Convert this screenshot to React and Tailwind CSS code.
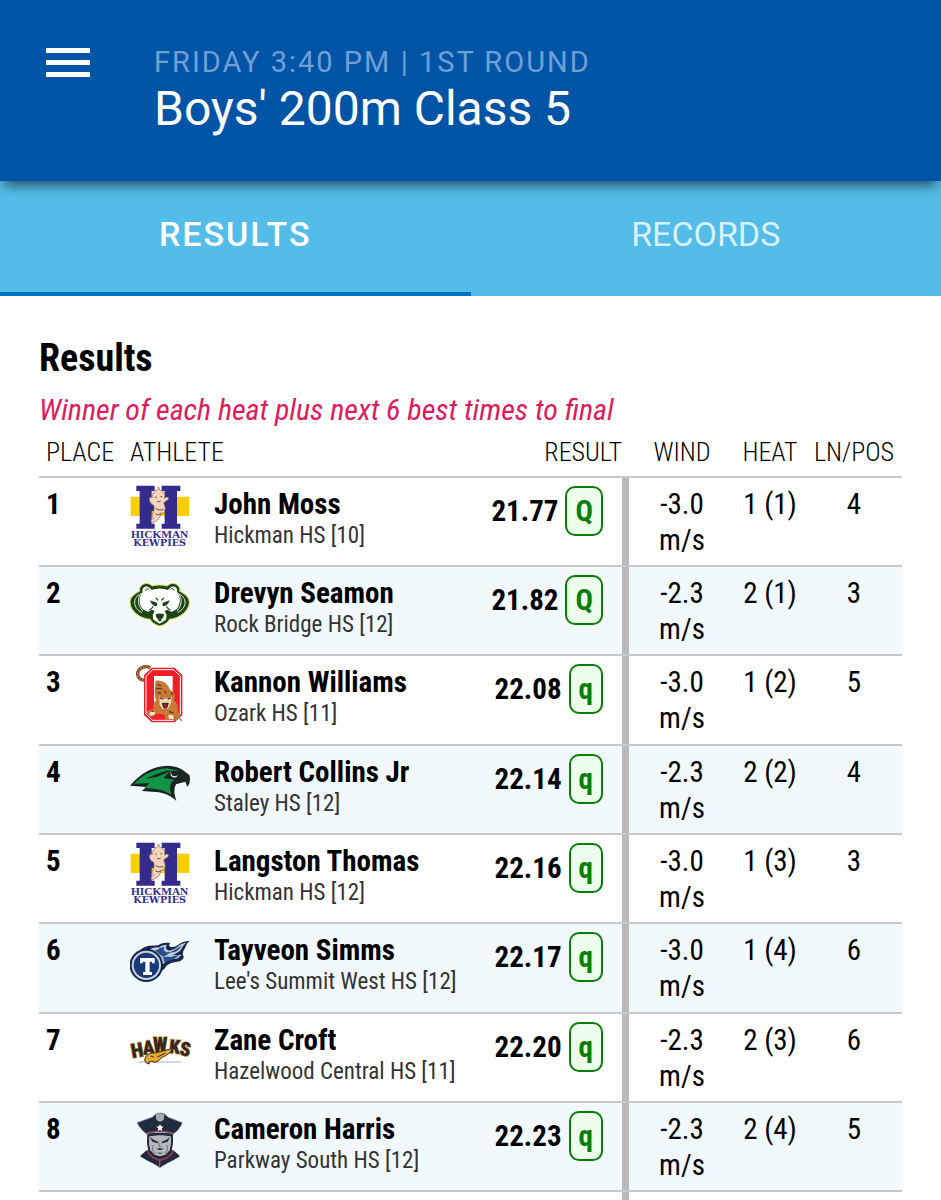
import React from "react";

const logos = {
  hickman: HickmanLogo,
  rockBridge: BruinLogo,
  ozark: OzarkLogo,
  staley: FalconLogo,
  leesSummit: TitanLogo,
  hazelwood: HawksLogo,
  parkway: PatriotLogo,
};

const results = [
  { place: 1, name: "John Moss", school: "Hickman HS [10]", logo: "hickman", time: "21.77", mark: "Q", wind: "-3.0", heat: "1 (1)", lane: 4 },
  { place: 2, name: "Drevyn Seamon", school: "Rock Bridge HS [12]", logo: "rockBridge", time: "21.82", mark: "Q", wind: "-2.3", heat: "2 (1)", lane: 3 },
  { place: 3, name: "Kannon Williams", school: "Ozark HS [11]", logo: "ozark", time: "22.08", mark: "q", wind: "-3.0", heat: "1 (2)", lane: 5 },
  { place: 4, name: "Robert Collins Jr", school: "Staley HS [12]", logo: "staley", time: "22.14", mark: "q", wind: "-2.3", heat: "2 (2)", lane: 4 },
  { place: 5, name: "Langston Thomas", school: "Hickman HS [12]", logo: "hickman", time: "22.16", mark: "q", wind: "-3.0", heat: "1 (3)", lane: 3 },
  { place: 6, name: "Tayveon Simms", school: "Lee's Summit West HS [12]", logo: "leesSummit", time: "22.17", mark: "q", wind: "-3.0", heat: "1 (4)", lane: 6 },
  { place: 7, name: "Zane Croft", school: "Hazelwood Central HS [11]", logo: "hazelwood", time: "22.20", mark: "q", wind: "-2.3", heat: "2 (3)", lane: 6 },
  { place: 8, name: "Cameron Harris", school: "Parkway South HS [12]", logo: "parkway", time: "22.23", mark: "q", wind: "-2.3", heat: "2 (4)", lane: 5 },
];

function HickmanLogo() {
  return (
    <svg viewBox="30 30 180 180" className="size-[60px] overflow-visible" role="img" aria-label="Hickman Kewpies">
      <path d="M32 62H208V120H32z" fill="#f6d000" />
      <path d="M49 29H104V45H95V80H134V45H125V29H181V45H171V143H181V158H125V143H134V105H95V143H104V158H49V143H59V45H49z" fill="#332c8c" />
      <path d="M112 42c4-4 3-6 1-9 6 3 5 6 6 9 12 3 17 12 14 24l8-3c6 0 6 7 1 10l-11 7c3 9 6 15 4 23-1 7-6 9-14 9 1 6-1 13-8 20l-16 9-5-6 10-9c-9-2-6-10-2-17 3-8 3-16 1-21-7-2-13-11-13-19l3-6 6 2c-1-10 4-19 15-23z" fill="#f6d3bf" stroke="#80604f" strokeWidth="2" />
      <path d="M105 63l5 1M121 63l5-2M111 76q6 4 11-1M107 98q10 7 24 3M106 114q10 6 16-1" fill="none" stroke="#493733" strokeWidth="2.5" />
      <text x="119" y="185" textAnchor="middle" fontSize="34" fontWeight="700" fontFamily="Liberation Serif, serif" fill="#332c8c">HICKMAN</text>
      <text x="119" y="210" textAnchor="middle" fontSize="29" fontWeight="700" fontFamily="DejaVu Serif, serif" fill="#332c8c">KEWPIES</text>
    </svg>
  );
}

function BruinLogo() {
  return (
    <svg viewBox="30 30 180 180" className="size-[60px]" role="img" aria-label="Rock Bridge Bruins">
      <path d="M64 62c8-9 24-9 32 1 15-4 31-4 46 0 8-10 24-10 32-1 5 5 7 11 5 17 18 8 29 20 29 33 0 25-30 49-60 51-5 10-13 16-29 20-15-4-24-10-28-20-32-2-61-26-61-51 0-13 11-25 29-33-2-6 0-12 5-17z" fill="#1c4518" stroke="#dfe04a" strokeWidth="3" />
      <path d="M58 88c-20 14-20 40 8 55M64 84c-12 16-12 36 4 54M181 88c20 14 20 40-8 55M175 84c12 16 12 36-4 54" fill="none" stroke="#e6f0de" strokeWidth="3" />
      <path d="M68 80c-4-12 12-22 22-10l5 5c16-6 33-6 49 0l5-5c10-12 26-2 22 10 10 14 12 32 2 48-4 6-12 10-20 12l-11-6-8 4 6 12-2 14-19 12-19-12-2-14 6-12-8-4-11 6c-8-2-16-6-20-12-9-16-7-34 3-48z" fill="#fff" />
      <path d="M77 78c-1-6 6-10 11-4M162 78c1-6-6-10-11-4" fill="none" stroke="#1c4518" strokeWidth="3" />
      <path d="M90 106l22 8-2 10c-9 0-16-6-20-18zM149 106l-22 8 2 10c9 0 16-6 20-18zM107 148q12-5 25 0c0 8-4 13-8 15v6h-9v-6c-4-2-8-7-8-15z" fill="#1c4518" />
      <path d="M107 99l8 7M132 99l-8 7M88 136q8-5 12-12M151 136q-8-5-12-12" fill="none" stroke="#1c4518" strokeWidth="3.5" />
    </svg>
  );
}

function OzarkLogo() {
  return (
    <svg viewBox="30 27 180 180" className="size-[60px]" role="img" aria-label="Ozark Tigers">
      <path d="M91 38c-18-9-38 3-38 19 0 11 9 20 25 19" fill="none" stroke="#7d432b" strokeWidth="10" />
      <path d="M91 38c-18-9-38 3-38 19 0 11 9 20 25 19" fill="none" stroke="#c88645" strokeWidth="5" strokeDasharray="5 4" />
      <path fillRule="evenodd" d="M95 38H164L187 61V180L164 202H95L72 180V61zM106 67V171H154V67z" fill="#ee1f27" />
      <path d="M98 44H161L181 64V177L161 196H98L78 177V64z" fill="none" stroke="#fff" strokeWidth="3" />
      <path d="M104 65H156V173H104z" fill="#fff" stroke="#fff" strokeWidth="4" />
      <path d="M107 77c19-3 38 8 43 28 17 6 16 21 11 31 9 4 13 17 12 31l8 16-9 13-36-2-3-15-19-4-19 11-15-7 3-12 19-6c-5-8-1-19 7-25-7-16-5-38-2-59z" fill="#c97835" />
      <path d="M112 88l12 5M108 100l18 1M112 112l12 4M153 112l5 9M147 170l14 4M158 183l7 9M99 167l-6 8M133 107l6 8" stroke="#5a3420" strokeWidth="3.5" />
      <path d="M117 124l14 7 12-1 13-5-3 20-9 16-16 1-9-12z" fill="#ecd6b4" />
      <path d="M119 128l10 5M153 128l-10 5" stroke="#342118" strokeWidth="3.5" />
      <path d="M127 145h18l-5 14h-8z" fill="#a01f2c" stroke="#342118" strokeWidth="3" />
      <path d="M145 180h14l4 12h-16zM90 171h16l-4 10-13 1z" fill="#efe2d3" />
      <path d="M171 181l14 17" stroke="#8a8a8a" strokeWidth="4" />
    </svg>
  );
}

function FalconLogo() {
  return (
    <svg viewBox="30 26 180 180" className="size-[60px]" role="img" aria-label="Staley Falcons">
      <path d="M30 121C62 84 97 62 144 61c24 2 42 8 53 20l11 8c4 12 2 27-6 35l-6-15-28 8c-7 14-6 28 1 50-16-16-35-25-62-27l-41-3 12-12z" fill="#1b2422" />
      <path d="M42 115c29-28 60-44 99-46l38 8-39-1c-26 7-48 17-65 25l38-7 37-16-20 20 34 5-9 7c-6 10-6 21-1 39-20-15-49-20-81-20l16-16z" fill="#119348" />
      <path d="M153 78c0 13 5 17 16 14l5-3c-4 7-9 9-15 7-7-3-9-9-6-18z" fill="#fff" />
    </svg>
  );
}

function TitanLogo() {
  return (
    <svg viewBox="30 21 180 180" className="size-[60px]" role="img" aria-label="Lee's Summit West Titans">
      <path d="M58 78c9-9 19-16 34-16l23-1c7-6 19-10 35-7-5 9-1 14 8 12 17-2 21-17 51-19-13 12-11 21-19 30l-2 14c6 2 4 12-9 18l-26 5-14 8c-4 9-8 14-22 16z" fill="#14264d" />
      <path d="M83 76c15-9 26-11 34-8 4-7 14-8 24-9-9 13 4 23 20 14 13-8 18-17 38-20-15 12-11 21-25 29l-15 9 25-2c-7 11-17 14-28 13l-19 8-16 15z" fill="#bfc9d6" />
      <path d="M104 75c14 2 14-10 28-9-5 15 11 19 25 13l28-17c-8 12-15 20-30 20-11 3-17 13-27 13zM129 97c18-4 21 2 31-3l18-5-18 15-27 8z" fill="#254f91" />
      <circle cx="79" cy="121" r="50" fill="#14264d" />
      <circle cx="79" cy="121" r="44" fill="#c8d2dc" />
      <circle cx="79" cy="121" r="38" fill="#173b78" />
      <path d="M60 99H104V115H96V110H89V141H96V150H69V141H76V110H68V115H60z" fill="#fff" />
    </svg>
  );
}

function HawksLogo() {
  return (
    <svg viewBox="30 19 180 180" className="size-[60px] overflow-visible" role="img" aria-label="Hazelwood Central Hawks">
      <g fontFamily="Roboto Condensed, sans-serif" fontWeight="900" fill="#36271d" stroke="#c9a45a" strokeWidth="4" paintOrder="stroke">
        <text x="37" y="128" fontSize="60" transform="rotate(-10 37 128)">H</text>
        <text x="70" y="117" fontSize="58" transform="rotate(-5 70 117)">A</text>
        <text x="99" y="110" fontSize="58">W</text>
        <text x="146" y="112" fontSize="58" transform="rotate(5 146 112)">K</text>
        <text x="177" y="118" fontSize="58" transform="rotate(9 177 118)">S</text>
      </g>
      <path d="M54 139H185" stroke="#8a83a0" strokeWidth="2" />
      <path d="M74 134c3-18 14-23 32-22l52-14c-8 15-18 22-33 27-5 8-13 14-21 15-7-4-13-4-18-1l2 6-9-3z" fill="#e5aa29" stroke="#36271d" strokeWidth="3" />
      <path d="M92 121l9 3M112 124l25-12" stroke="#36271d" strokeWidth="3" />
    </svg>
  );
}

function PatriotLogo() {
  return (
    <svg viewBox="30 32 180 180" className="size-[60px]" role="img" aria-label="Parkway South Patriots">
      <path d="M80 150l-20 17c18 14 40 20 60 35 20-15 42-21 60-35l-20-17z" fill="#202b40" />
      <path d="M82 150q5 20 38 30 34-9 40-30M119 177v24" fill="none" stroke="#c73b55" strokeWidth="4" />
      <path d="M82 98h77v30l-4 24-17 16-18 5-18-5-17-16-4-24z" fill="#202b40" />
      <path d="M88 108l27-3h11l27 3v22l-4 20-13 13-16 5-16-5-13-13-4-20z" fill="#b6b9bd" />
      <path d="M90 110l12 9 13 5-1 5-17-5zM150 110l-12 9-13 5 1 5 17-5zM108 146l12-3 12 3-12 3zM111 157h18l-9 4z" fill="#202b40" />
      <path d="M117 126v12h7M99 134l-1 16 9 10M141 134l1 16-9 10" fill="none" stroke="#666e79" strokeWidth="3" />
      <path d="M51 67L98 50c10-14 34-17 45 0l44 17c-5 14-15 25-27 34-24-7-54-7-80 0-12-9-22-20-29-34z" fill="#202b40" stroke="#8b939d" strokeWidth="2" />
      <path d="M80 98q40-12 80 0" fill="none" stroke="#c73b55" strokeWidth="3" />
      <path d="M107 43q13-7 26 0l-2 16-11 6-11-6z" fill="#a7abb0" />
      <path d="M120 71l3 7 8 1-6 5 2 8-7-4-7 4 2-8-6-5 8-1z" fill="#fff" />
    </svg>
  );
}

function ResultRow({ row }) {
  const Logo = logos[row.logo];
  return (
    <tr className="align-top even:bg-[#f1f9fd] *:border-b-2 *:border-[#c8c9cc] *:pt-2 *:pb-[7px] nth-[3n]:*:pb-2">
      <td className="pl-[7px] text-[29px] leading-[37px] font-bold">{row.place}</td>
      <td className="pl-2">
        <div className="flex gap-6">
          <div className="h-[60px] w-[60px] shrink-0">
            <Logo />
          </div>
          <div className="whitespace-nowrap">
            <div className="text-[29px] leading-[37px] font-bold">{row.name}</div>
            <div className="text-[23px] leading-[26px] text-[#333]">{row.school}</div>
          </div>
        </div>
      </td>
      <td className="pr-[19px]">
        <div className="flex items-center justify-end gap-[7px] text-[29px] leading-9 font-bold">
          {row.time}
          <span className="rounded-[10px] border-2 border-[#087d08] bg-[#edfdeb] px-2 py-[5px] text-[#087d08]">{row.mark}</span>
        </div>
      </td>
      <td className="pr-2 pl-4 text-center text-[29px] leading-9 shadow-[inset_7px_0_0_#b9b9b9]">
        {row.wind}
        <br />
        m/s
      </td>
      <td className="text-center text-[29px] leading-9 whitespace-nowrap">{row.heat}</td>
      <td className="text-center text-[29px] leading-9">{row.lane}</td>
    </tr>
  );
}

export default function App() {
  return (
    <div className="min-h-screen bg-white font-['Roboto_Condensed',Roboto,sans-serif] text-black">
      {/* Top bar */}
      <header className="relative z-10 flex items-start bg-[#0054a6] px-[46px] pt-11 pb-11 font-[Roboto,sans-serif] text-white shadow-[0_8px_12px_-4px_rgba(0,0,0,0.6)]">
        <button type="button" aria-label="Menu" className="mt-1 flex w-11 shrink-0 flex-col gap-[7px]">
          <span className="h-[5px] w-full bg-white" />
          <span className="h-[5px] w-full bg-white" />
          <span className="h-[5px] w-full bg-white" />
        </button>
        <div className="ml-16">
          <p className="text-[29px] leading-9 tracking-[2px] text-[#6ea0d6]">FRIDAY 3:40 PM | 1ST ROUND</p>
          <h1 className="text-[48px] leading-[57px]">Boys' 200m Class 5</h1>
        </div>
      </header>

      {/* Tabs */}
      <nav className="grid grid-cols-2 bg-[#54bce8] font-[Roboto,sans-serif] text-[34px] leading-10 text-white">
        <button type="button" className="border-b-4 border-[#0072bc] pt-[33px] pb-[38px] font-medium tracking-[2px]">RESULTS</button>
        <button type="button" className="border-b-4 border-transparent pt-[33px] pb-[38px] text-[#d8f2fd]">RECORDS</button>
      </nav>

      <main className="px-[39px] pt-10">
        <h2 className="text-[38px] leading-[45px] font-bold">Results</h2>
        <p className="mt-[11px] text-[30px] leading-9 text-[#dc1c5c] italic">Winner of each heat plus next 6 best times to final</p>
        <table className="w-full table-fixed border-separate border-spacing-0">
          <colgroup>
            <col className="w-[83px]" />
            <col />
            <col className="w-[140px]" />
            <col className="w-[112px]" />
            <col className="w-[72px]" />
            <col className="w-24" />
          </colgroup>
          <thead>
            <tr className="text-[26px] leading-[38px] whitespace-nowrap *:border-b-2 *:border-[#c8c9cc] *:pt-[5px] *:pb-[5px] *:font-light">
              <th className="pl-[7px] text-left">PLACE</th>
              <th className="pl-2 text-left">ATHLETE</th>
              <th className="text-right">RESULT</th>
              <th className="pl-2">WIND</th>
              <th>HEAT</th>
              <th>LN/POS</th>
            </tr>
          </thead>
          <tbody>
            {results.map((row) => (
              <ResultRow key={row.place} row={row} />
            ))}
          </tbody>
          <tfoot>
            <tr className="h-2">
              <td colSpan={3} />
              <td className="shadow-[inset_7px_0_0_#b9b9b9]" />
              <td colSpan={2} />
            </tr>
          </tfoot>
        </table>
      </main>
    </div>
  );
}
